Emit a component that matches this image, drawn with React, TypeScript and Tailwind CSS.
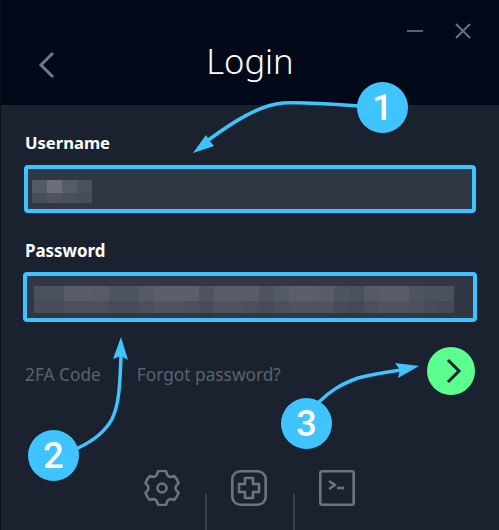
const usernameBlur = [
  ["#545a65", "#6a6f78", "#565c66", "#4c525d"],
  ["#484e59", "#4e545e", "#4a505b", "#484e59"],
];

const passwordTop = ["#4b515c", "#4b515c", "#575c66", "#575c66", "#565b65", "#4f555f", "#4f555f", "#555b65", "#5a5f69", "#5a5f69", "#5a5f69", "#4f555f", "#585d67", "#585d67", "#585d67", "#4f555f", "#555b65", "#5a5f69", "#5a5f69", "#585d67", "#4f555f", "#4b515c", "#555b65", "#585d67", "#585d67", "#4f555f", "#4c525c", "#4c525c"];
const passwordBottom = ["#474d58", "#474d58", "#4b515b", "#4b515b", "#4b515b", "#474d58", "#474d58", "#4b515b", "#4f545e", "#4f545e", "#4b515b", "#474d58", "#4f545e", "#4f545e", "#4b515b", "#474d58", "#4b515b", "#4f545e", "#4f545e", "#4f545e", "#474d58", "#444a55", "#4b515b", "#4f545e", "#4f545e", "#4b515b", "#474d58", "#444a55"];

// six rounded lobes, same outline as the app's settings icon
function gearPath() {
  const point = (deg: number, r: number) => {
    const rad = (deg * Math.PI) / 180;
    return `${(18 + r * Math.cos(rad)).toFixed(2)} ${(18 + r * Math.sin(rad)).toFixed(2)}`;
  };
  let d = `M${point(-104, 17.2)}`;
  for (let i = 0; i < 6; i++) {
    const lobe = -90 + i * 60;
    d += `A17.2 17.2 0 0 1 ${point(lobe + 14, 17.2)}`;
    d += `Q${point(lobe + 30, 10.4)} ${point(lobe + 46, 17.2)}`;
  }
  return `${d}Z`;
}

function BlurRow({ colors, height }: { colors: string[]; height: string }) {
  return (
    <div className={`flex ${height}`}>
      {colors.map((color, i) => (
        <div key={i} className="w-[15px]" style={{ backgroundColor: color }} />
      ))}
    </div>
  );
}

function Marker({ label, className }: { label: string; className: string }) {
  return (
    <div
      className={`absolute flex h-[51px] w-[51px] items-center justify-center rounded-full bg-[#3fc4ff] font-['Roboto',sans-serif] text-[36px] font-medium text-white ${className}`}
    >
      {label}
    </div>
  );
}

function Arrows() {
  return (
    <svg className="pointer-events-none absolute left-0 top-0" width="499" height="530" fill="none">
      <g stroke="#3fc4ff" strokeWidth="3.5" strokeLinecap="round">
        <path d="M358 106C330 104 300 102 282 103C258 105 232 122 206 141" />
        <path d="M77 448C92 441 104 432 111 419C118 405 119 385 120 356" />
        <path d="M318 402C328 392 338 385 357 378C372 374 386 372 400 370" />
      </g>
      <g fill="#3fc4ff">
        <path d="M192 153L205 135L208 140L213 146Z" />
        <path d="M120 337L127 360L120 356L112 359Z" />
        <path d="M418 366L394 363L399 370L397 378Z" />
      </g>
    </svg>
  );
}

export default function App() {
  return (
    <div className="relative h-[530px] w-[499px] overflow-hidden border-l border-[#0b111b] bg-[#19222e] font-['Noto_Sans',sans-serif]">
      <header className="relative flex h-[105px] items-center justify-center bg-[#020a1a]">
        <svg className="absolute left-[36px] top-[51px]" width="20" height="28" viewBox="0 0 20 28" fill="none">
          <path d="M16 2L4 14L16 26" stroke="#727780" strokeWidth="3" />
        </svg>
        <h1 className="mt-[18px] text-[34.5px] font-light leading-none text-white">Login</h1>
        <div className="absolute right-[28px] top-[23px] flex items-center gap-[32px]">
          <svg width="16" height="16" viewBox="0 0 16 16" fill="none">
            <path d="M0 8H16" stroke="#5d636c" strokeWidth="2" />
          </svg>
          <svg width="16" height="16" viewBox="0 0 16 16" fill="none">
            <path d="M1 1L15 15M15 1L1 15" stroke="#6a7078" strokeWidth="2" />
          </svg>
        </div>
      </header>

      <main className="px-[23px]">
        <label className="ml-[1px] mt-[27px] block text-[16.6px] font-bold leading-[22px] text-white">Username</label>
        <div className="mt-[11px] h-[48px] rounded-[4px] border-[4px] border-[#3bc4ff] bg-[#313744] pl-[4px] pt-[11px]">
          <BlurRow colors={usernameBlur[0]} height="h-[13px]" />
          <BlurRow colors={usernameBlur[1]} height="h-[10px]" />
        </div>

        <label className="ml-[1px] mt-[27px] block text-[16.9px] font-bold leading-[22px] text-white">Password</label>
        <div className="-mx-[1px] mt-[10px] h-[50px] rounded-[4px] border-[4px] border-[#3bc4ff] bg-[#313744] pl-[7px] pt-[10px]">
          <BlurRow colors={passwordTop} height="h-[15px]" />
          <BlurRow colors={passwordBottom} height="h-[12px]" />
        </div>

        <div className="mt-[25px] flex h-[48px] items-center text-[17.3px] text-[#5b626b]">
          <span className="ml-[1px] pt-[8px]">2FA Code</span>
          <span className="ml-[36px] pt-[8px]">Forgot password?</span>
          <button className="ml-auto mr-[1px] flex h-[48px] w-[48px] items-center justify-center rounded-full bg-[#5cff8f] pl-[5px]">
            <svg width="16" height="26" viewBox="0 0 16 26" fill="none">
              <path d="M2 2L13 13L2 24" stroke="#1a2430" strokeWidth="3" />
            </svg>
          </button>
        </div>
      </main>

      <footer className="mt-[75px] flex h-[60px] justify-center pr-[1px]">
        <div className="flex w-[88px] justify-center pl-[3px]">
          <svg width="36" height="36" viewBox="0 0 36 36" fill="none" stroke="#6f747c" strokeWidth="2.6" strokeLinejoin="round">
            <path d={gearPath()} />
            <circle cx="18" cy="18" r="4.5" />
          </svg>
        </div>
        <div className="h-[36px] w-[2px] self-end bg-[#3a4049]" />
        <div className="flex w-[86px] justify-center pr-[2px]">
          <svg width="36" height="36" viewBox="0 0 36 36" fill="none" stroke="#6f747c" strokeWidth="2.6" strokeLinejoin="round">
            <rect x="1.3" y="1.3" width="33.4" height="33.4" rx="8" />
            <path d="M14 8H22V14H28V22H22V28H14V22H8V14H14Z" />
          </svg>
        </div>
        <div className="h-[36px] w-[2px] self-end bg-[#3a4049]" />
        <div className="flex w-[88px] justify-center pr-[4px]">
          <svg width="36" height="36" viewBox="0 0 36 36" fill="none" stroke="#6f747c" strokeWidth="2.6" strokeLinejoin="round">
            <rect x="1.3" y="1.3" width="33.4" height="33.4" rx="2" />
            <path d="M10 11L16 15L10 19" />
            <path d="M18 18H25" />
          </svg>
        </div>
      </footer>

      <Arrows />
      <Marker label="1" className="left-[356px] top-[82px]" />
      <Marker label="2" className="left-[27px] top-[430px]" />
      <Marker label="3" className="left-[280px] top-[398px]" />
    </div>
  );
}
